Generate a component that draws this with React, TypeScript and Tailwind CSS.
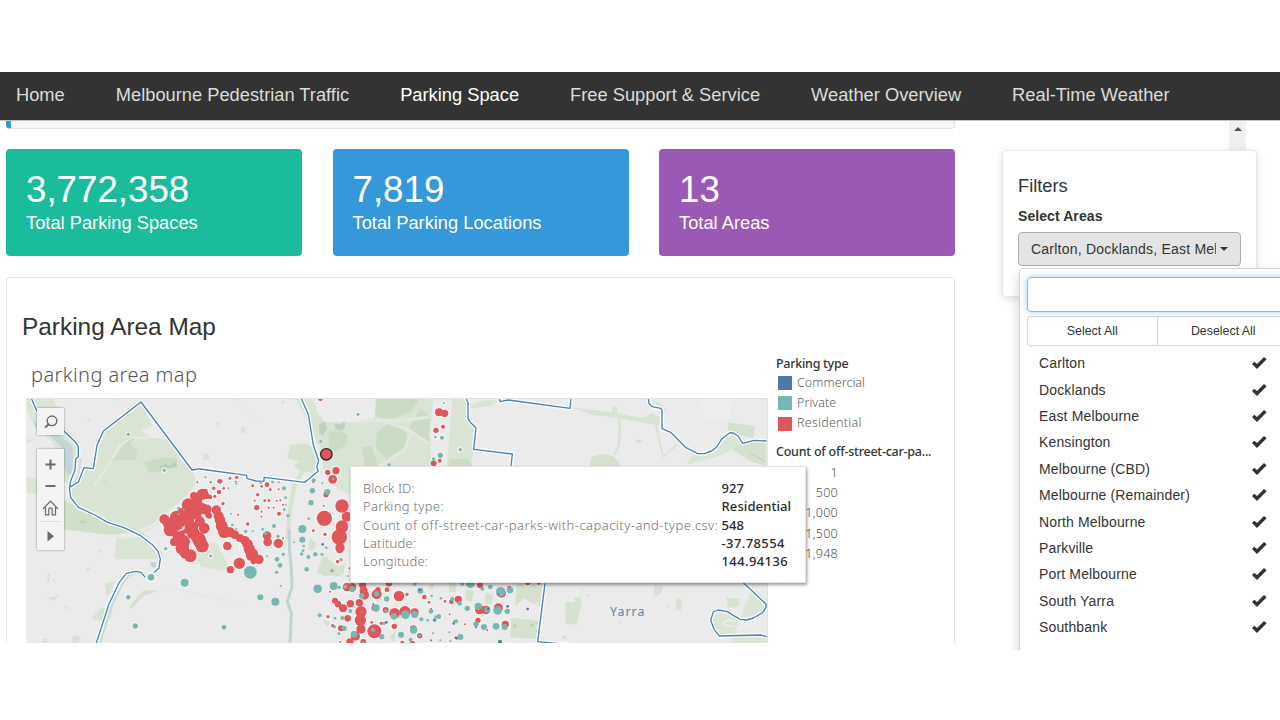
import React from "react";

type Dot = [number, number, number];

const RED = "#e15759";
const TEAL = "#76b7b2";
const BLUE = "#4e79a7";

const navItems = [
  "Home",
  "Melbourne Pedestrian Traffic",
  "Parking Space",
  "Free Support & Service",
  "Weather Overview",
  "Real-Time Weather",
];

const areas = [
  "Carlton",
  "Docklands",
  "East Melbourne",
  "Kensington",
  "Melbourne (CBD)",
  "Melbourne (Remainder)",
  "North Melbourne",
  "Parkville",
  "Port Melbourne",
  "South Yarra",
  "Southbank",
];

/* Marker coordinates are in thirds of a pixel, relative to each map tile. */
const westRed: Dot[] = [
  [532, 277, 3], [572, 277, 3], [598, 274, 6], [581, 295, 5], [597, 306, 6], [585, 319, 4], [571, 321, 6],
  [556, 303, 7], [547, 313, 17], [522, 318, 12], [560, 318, 9], [505, 345, 20], [530, 335, 17], [515, 360, 20],
  [433, 388, 15], [470, 382, 20], [445, 400, 17], [450, 420, 19], [490, 375, 22], [545, 355, 17], [562, 357, 13],
  [567, 377, 9], [530, 375, 15], [540, 395, 15], [553, 414, 15], [475, 430, 20], [462, 456, 12], [490, 455, 20],
  [487, 475, 20], [495, 490, 16], [511, 497, 19], [520, 410, 15], [520, 430, 19], [535, 445, 20], [547, 468, 19],
  [540, 455, 20], [465, 405, 22], [505, 415, 18], [500, 390, 22], [475, 450, 18],
];
const westTeal: Dot[] = [
  [325, 133, 5], [433, 241, 5], [557, 262, 3], [476, 355, 5], [476, 372, 4], [492, 359, 3], [437, 476, 5],
  [572, 498, 4], [393, 562, 10], [494, 578, 12], [325, 622, 7], [346, 708, 8],
];

const midRed: Dot[] = [
  [361, 26, 7], [408, 242, 11], [383, 247, 8], [398, 268, 13], [378, 314, 8], [371, 347, 3], [426, 348, 20],
  [373, 385, 23], [440, 380, 15], [426, 410, 19], [418, 441, 23], [420, 473, 14], [340, 422, 4], [375, 433, 5],
  [412, 515, 4], [450, 535, 4], [340, 277, 3], [60, 274, 7], [110, 262, 5], [90, 265, 4], [107, 275, 3],
  [32, 277, 3], [41, 295, 4], [57, 306, 6], [71, 295, 4], [44, 319, 4], [30, 321, 6], [158, 287, 4],
  [185, 289, 4], [201, 284, 7], [173, 314, 5], [211, 299, 4], [236, 298, 3], [164, 332, 3], [194, 332, 4],
  [207, 332, 4], [230, 332, 3], [241, 331, 3], [170, 353, 8], [185, 365, 3], [206, 353, 3], [221, 353, 3],
  [249, 344, 3], [184, 380, 3], [237, 371, 6], [69, 341, 5], [114, 374, 3], [143, 402, 5], [249, 445, 3],
  [49, 360, 14], [56, 378, 15], [60, 390, 16], [65, 408, 18], [73, 425, 19], [90, 427, 15], [104, 434, 13],
  [120, 444, 12], [135, 452, 14], [143, 463, 16], [148, 478, 17], [156, 494, 19], [177, 508, 14], [160, 515, 8],
  [25, 375, 9], [82, 468, 13], [118, 520, 17], [91, 539, 11], [201, 437, 13], [203, 456, 13], [235, 460, 14],
  [10, 312, 15], [12, 357, 16], [13, 415, 16], [6, 468, 19], [3, 450, 15], [20, 362, 12],
];
const midTeal: Dot[] = [
  [474, 73, 4], [362, 154, 4], [567, 225, 5], [341, 271, 6], [337, 302, 8], [382, 306, 9], [333, 338, 8],
  [367, 280, 3], [326, 386, 4], [307, 417, 12], [307, 449, 9], [311, 468, 4], [309, 482, 4], [305, 492, 5],
  [325, 501, 6], [346, 493, 6], [364, 493, 3], [320, 538, 7], [379, 473, 4], [423, 510, 4], [395, 542, 3],
  [252, 295, 6], [257, 323, 4], [257, 344, 3], [253, 359, 4], [264, 377, 5], [222, 408, 6], [234, 439, 5],
  [250, 493, 5], [231, 508, 7], [240, 526, 7], [230, 547, 5], [201, 499, 3], [242, 588, 3], [282, 457, 3],
  [151, 547, 19], [181, 622, 9], [226, 635, 12], [72, 712, 7], [32, 498, 4], [137, 424, 5], [158, 423, 3],
  [109, 417, 3], [97, 405, 4], [93, 371, 3], [188, 418, 4], [197, 430, 5], [16, 262, 3], [85, 295, 3],
  [109, 281, 3], [218, 276, 4], [182, 278, 4], [237, 277, 3], [399, 267, 4], [397, 542, 4],
  [353, 596, 12],
];

const northRed: Dot[] = [
  [297, 67, 12], [314, 70, 11], [288, 121, 8], [309, 110, 6], [281, 220, 9], [299, 212, 6],
];
const northTeal: Dot[] = [
  [54, 73, 4], [311, 39, 3], [286, 141, 4], [306, 143, 6], [301, 196, 8], [281, 207, 5], [361, 179, 5],
];

const southRed: Dot[] = [
  [89, 0, 10], [83, 35, 5], [60, 125, 3], [111, 111, 13], [126, 112, 13], [158, 105, 11], [161, 122, 12],
  [163, 135, 14], [200, 133, 15], [204, 119, 8], [237, 100, 10], [231, 119, 7], [267, 138, 16], [291, 133, 5],
  [75, 152, 9], [84, 162, 10], [99, 175, 12], [121, 161, 11], [148, 158, 11], [153, 185, 17], [151, 211, 17],
  [153, 237, 14], [136, 258, 14], [120, 276, 11], [160, 276, 9], [113, 205, 10], [54, 200, 5], [68, 227, 5],
  [93, 235, 9], [193, 244, 21], [214, 220, 5], [253, 229, 8], [227, 180, 9], [254, 190, 16], [285, 185, 17],
  [314, 187, 12], [193, 174, 9], [310, 236, 10], [329, 257, 8], [307, 280, 8], [277, 278, 6], [343, 141, 7],
  [357, 157, 4], [363, 176, 3], [387, 199, 6], [405, 154, 4], [424, 155, 7], [445, 148, 11], [419, 193, 3],
  [510, 106, 9], [509, 179, 14], [528, 180, 13], [565, 174, 14], [574, 129, 14], [598, 114, 7], [504, 211, 8],
  [586, 223, 11], [465, 223, 3], [532, 241, 3], [437, 263, 4], [653, 97, 9], [686, 99, 6], [432, 214, 3],
  [185, 217, 4], [91, 276, 3], [316, 97, 5],
];
const southTeal: Dot[] = [
  [16, 13, 6], [37, 14, 4], [93, 29, 5], [65, 63, 4], [113, 78, 3], [23, 116, 12], [71, 108, 12], [88, 112, 5],
  [106, 110, 6], [127, 117, 9], [155, 138, 8], [200, 131, 8], [230, 147, 8], [331, 122, 9], [314, 101, 6],
  [198, 174, 11], [252, 199, 10], [286, 194, 13], [314, 193, 11], [227, 183, 5], [121, 183, 6], [97, 204, 6],
  [75, 205, 4], [29, 196, 6], [73, 230, 5], [102, 235, 8], [87, 251, 4], [132, 253, 10], [189, 240, 6],
  [215, 260, 8], [222, 220, 5], [311, 240, 11], [273, 254, 9], [302, 269, 6], [329, 257, 4], [334, 208, 6],
  [363, 184, 7], [374, 210, 6], [353, 211, 4], [386, 200, 7], [365, 138, 4], [393, 145, 4], [427, 147, 6],
  [449, 160, 7], [472, 175, 8], [457, 101, 6], [481, 101, 13], [541, 111, 7], [517, 116, 6], [572, 125, 14],
  [600, 120, 10], [505, 169, 11], [532, 179, 9], [563, 181, 13], [592, 184, 8], [498, 222, 8], [522, 231, 9],
  [558, 229, 10], [584, 231, 9], [438, 214, 6], [431, 220, 4], [451, 261, 9], [418, 247, 3], [369, 250, 3],
  [421, 273, 3], [391, 271, 3], [160, 280, 5], [377, 200, 4],
];
const southBlue: Dot[] = [
  [329, 120, 4], [190, 163, 3], [229, 217, 4], [373, 210, 3], [431, 221, 3], [440, 265, 4], [570, 275, 6],
  [563, 133, 3], [535, 176, 4], [593, 169, 4], [653, 177, 4], [498, 232, 3], [363, 271, 3],
];

function Halos({ dots }: { dots: Dot[] }) {
  return (
    <>
      {dots.map(([x, y, r], i) => (
        <circle key={i} cx={x} cy={y} r={r + 4} fill="#f4f5f4" opacity="0.8" />
      ))}
    </>
  );
}

function Dots({ dots, color }: { dots: Dot[]; color: string }) {
  return (
    <>
      {dots.map(([x, y, r], i) => (
        <circle key={i} cx={x} cy={y} r={r} fill={color} />
      ))}
    </>
  );
}

function Boundary({ d }: { d: string }) {
  return (
    <>
      <path d={d} fill="none" stroke="#fafbfc" strokeWidth="12" strokeLinejoin="round" />
      <path d={d} fill="none" stroke="#4f83a8" strokeWidth="4" strokeLinejoin="round" />
    </>
  );
}

function ParkingMap() {
  return (
    <svg className="block h-[245px] w-[742px]" viewBox="26 398 742 245">
      <rect x="26" y="398" width="742" height="245" fill="#ebebeb" />
      {/* western parkland */}
      <g transform="translate(20 390) scale(0.333333)">
        <path d="M20 25H95L128 72L122 100L165 140L180 170L172 240L150 290H148L130 270L110 240L100 160L45 110L20 60Z" fill="#dbe5d6" />
        <path d="M20 258L52 268V312L20 308Z" fill="#dbe5d6" />
        <path d="M40 95L110 130L158 168L158 245L145 255L130 230L132 180L95 140L45 110Z" fill="#c4d5d5" />
        <path d="M362 36L397 105L365 122L392 143L455 146L516 240L530 275L487 335L420 400L380 425L330 430L260 395L175 352L150 320L150 293L175 275L192 234L220 236L230 165L250 124Z" fill="#dae4d5" />
        <path d="M130 330L175 352L260 395L345 430L290 437L130 418Z" fill="#d0dfc9" />
        <path d="M288 447L360 440L410 475L420 507L285 508Z" fill="#dae4d5" />
        <path d="M325 152L353 185L347 208L275 212Z" fill="#cddcc6" />
        <path d="M372 215L440 202L470 205L472 232L420 245L385 248Z" fill="#cbdcc4" />
        <path d="M417 230l20-8l10 6l20-12l4 12l-24 6l-24 3z" fill="#bacdbb" />
        <path d="M245 275l18-4l-10 8zM280 212L300 180l45-35L330 140" fill="#cddcc6" />
        <path d="M220 290L272 215L300 165L335 143L392 143" stroke="#e6ebe3" strokeWidth="5" fill="none" />
        <path d="M250 440L340 432L400 405L440 370L500 325" stroke="#e8eae7" strokeWidth="9" fill="none" />
        <path d="M372 600L416 602L370 618L335 657L327 650Z" fill="#d5e1d0" />
        <path d="M82 625l38-10l-18 18zM132 645l14 6l-4 10zM215 685l28-30l35-5l-5 35l-35 7zM255 580l30-5l-10 25l-15 20zM83 552h6v24h-7zM94 567l12 1l-2 10zM196 536l20-3l-14 14zM66 748l14-5l6 18h-20zM160 735l24 5l-10 22h-20zM230 480h22l-10 7zM200 85l10 5l-5 8zM18 150l26-4l-20 14zM550 192l16 2v16l-14-1zM520 508L555 450L600 480V536Z" fill="#d7e3d2" />
        <path d="M390 517h17v15h-12z" fill="#c4d0d2" />
        <path d="M188 385v20m-8-12l8 6l10-6m-18 4h20" stroke="#b9cdb0" strokeWidth="2" fill="none" />
        <path d="M182 205L176 255L155 293L157 320L180 350L270 392L370 432L424 490L420 535L405 550" stroke="#c8dcdc" strokeWidth="5" fill="none" />
        <path d="M378 553L348 548L324 558L304 588L274 650L240 762" stroke="#c5dadb" strokeWidth="6" fill="none" />
        <path d="M440 590L600 627M285 20L310 62" stroke="#e3e4e4" strokeWidth="2" fill="none" />
        <Boundary d="M35 27L50 62L78 92L132 123L165 155L175 170V200L167 207L165 240L152 273L148 293L175 276L192 233L220 236L231 166L250 123L363 36L516 240L542 236L600 245" />
        <Boundary d="M148 293L152 322L175 352L225 375L263 397L310 412L362 437L397 464L414 484L421 507L417 534L402 548" />
        <Boundary d="M376 562L363 547L348 544L319 550L298 577L267 642L228 762" />
        <circle cx="393" cy="562" r="16" fill="#f3f4f3" />
      </g>
      {/* central parkland */}
      <g transform="translate(200 390) scale(0.333333)">
        <path d="M285 24H335L372 90L440 95H530V25H600V228H452V320L410 290L370 235L360 180L340 130L310 70Z" fill="#dae4d5" />
        <path d="M348 65L375 95H520L525 25H350Z" fill="#ececec" />
        <path d="M270 165L310 160L350 175L357 210L345 243L305 250L280 225L300 215L262 205Z" fill="#d6e2d0" />
        <path d="M385 125L420 122L444 135L442 160L410 185L388 180Z" fill="#cbdcc4" />
        <path d="M357 100l20-4l5 20l-14 22l-10-8zM402 100l18 2l14-6l2 14l-10 12l-20-4z" fill="#c0d0c4" />
        <path d="M0 450L50 460L90 535L70 542L0 530Z" fill="#dae4d5" />
        <path d="M350 540L375 500L420 530L425 555L370 558ZM325 480l5-36l20 18l-8 20zM50 97l8-3l-2 16h-6zM123 112l10-2l3 17l-12 3zM12 193l14-2v17l-16 2zM244 33h12l-8 12zM370 688l16 5l4 20z" fill="#d7e3d2" />
        <path d="M310 240L283 285L270 360L262 450" stroke="#d8e2d3" strokeWidth="13" fill="none" />
        <path d="M268 420L268 470L274 540L276 590L262 635L274 670L270 762" stroke="#bed3d5" strokeWidth="9" fill="none" />
        <path d="M0 615L125 640M100 25L170 90M460 560V762" stroke="#e5e6e6" strokeWidth="2" fill="none" />
        <Boundary d="M0 237L140 256V265L168 273L192 274V262L315 277L355 243L350 232L356 212L340 165L325 73L303 24" />
      </g>
      <g transform="translate(340 390) scale(0.333333)">
        <path d="M108 25L232 25L215 60L165 88L105 83Z" fill="#ccdcc5" />
        <path d="M105 83L165 88L232 25H335L375 25L385 90L405 115L400 178L395 228H30V180L60 95Z" fill="#dae4d5" />
        <path d="M110 28H240L215 62L165 85L105 82ZM110 130L140 102L185 103L210 160L140 208L108 175ZM240 58L276 80L272 158L205 118ZM65 172L95 168L115 228H75ZM330 208L385 207L395 228H325Z" fill="#cbdcc4" />
        <path d="M280 26H338L320 228H275L268 130Z" fill="#e9ebe8" />
        <path d="M60 95L200 90L275 80M110 85L205 120L265 160M215 120L195 180L120 228" stroke="#e1e8de" strokeWidth="10" fill="none" />
        <path d="M390 45L430 30L475 32L450 48L395 55Z" fill="#d9e4d4" />
        <Boundary d="M378 25L384 38V85L391 97L408 114L401 178L517 192L513 228" />
        <Boundary d="M478 25L480 35L505 30L690 55L693 25" />
      </g>
      {/* eastern parkland */}
      <g transform="translate(540 390) scale(0.333333)">
        <path d="M92 52L215 67L217 47L232 50V70L310 85L335 70L360 80L355 105L310 98L240 85L160 75Z" fill="#d8e3d3" />
        <path d="M237 82L240 125L235 170L222 195" stroke="#d8e3d3" strokeWidth="8" fill="none" />
        <path d="M345 95L370 200L410 165" stroke="#d8e3d3" strokeWidth="5" fill="none" />
        <path d="M360 110L400 140L470 190L520 190L560 140L590 140L605 160L545 195L440 225L455 195Z" fill="#dae5d5" />
        <path d="M335 30L358 38L385 70L360 55ZM565 97L645 108L640 145L600 135L562 120ZM575 178L605 160L678 150V228L635 215ZM285 148l24 4l-16 9zM150 227Q145 195 185 192Q230 190 240 228Z" fill="#d4e1cf" />
        <path d="M75 640L105 635L102 625L120 620L125 640L110 705L77 700ZM345 585L368 590L365 610L345 620L340 605ZM410 624L426 630L422 664L407 658ZM560 622L600 628L598 645L580 655L562 650ZM125 593l6 5l-6 8zM130 615l20-2v7zM378 645l14 2l-10 5zM233 690l10 5l-4 8zM70 737l9 2v9l-10-1z" fill="#d7e3d2" />
        <path d="M640 585L680 630V650L670 670L615 690L550 670L525 662L514 690L538 738H680V762H570Z" fill="#dae5d5" />
        <path d="M550 700Q560 680 620 705L678 692M550 700Q560 715 678 712M640 590L678 622" stroke="#eeefee" strokeWidth="4" fill="none" />
        <path d="M630 190L678 215" stroke="#b9d0c6" strokeWidth="3" fill="none" />
        <path d="M486 25h86l-2 60q-40 15-80-5z" fill="#eeeeee" />
        <Boundary d="M325 25L327 40L336 50L362 55L366 60V116L392 127L438 173L473 191H493L515 183L530 171L546 146L568 129H580L594 138L608 160L643 151L680 153" />
        <Boundary d="M610 578L678 642V652L668 668L640 684L620 690L600 688L560 664L534 660L520 666L512 690L522 718L538 738L662 735L680 740" />
        <text x="210" y="679" fontSize="37" letterSpacing="3.2" fill="#5b86a3" fontFamily="Noto Sans, sans-serif">
          Yarra
        </text>
      </g>
      <g transform="translate(310 550) scale(0.333333)">
        <path d="M22 70L35 25L50 20L95 80ZM85 55L105 38L100 75ZM360 100h12l-3 18h-12zM418 100h20v26h-22zM468 118l24 6l-7 32l-20-6zM527 128l22 6l-5 28l-20-5zM620 100H697L690 165L665 160L645 145L615 168ZM605 203L688 212L680 267L600 262ZM770 155l10 2v65h-12zM38 210l22 10l-10 10zM238 260l20-18l-4 34zM757 256l12 2v10l-12-1z" fill="#d4e1cf" />
        <path d="M608 225l10-4l4 10l-14 3zM660 225l10-5l5 8l-12 4z" fill="#bed4b8" />
        <Boundary d="M705 100L683 275L780 284" />
      </g>
      {/* marker halos, below every marker */}
      <g transform="translate(340 390) scale(0.333333)">
        <Halos dots={northRed} />
        <Halos dots={northTeal} />
      </g>
      <g transform="translate(20 390) scale(0.333333)">
        <Halos dots={westRed} />
        <Halos dots={westTeal} />
      </g>
      <g transform="translate(200 390) scale(0.333333)">
        <Halos dots={midRed} />
      </g>
      <g transform="translate(310 550) scale(0.333333)">
        <Halos dots={southRed} />
      </g>
      {/* markers */}
      <g transform="translate(340 390) scale(0.333333)">
        <Dots dots={northRed} color={RED} />
        <Dots dots={northTeal} color={TEAL} />
      </g>
      <g transform="translate(20 390) scale(0.333333)">
        <Dots dots={westRed} color={RED} />
        <path d="M470 424l16-8l8-12v14l-14 6z" fill="#f1e9e9" />
        <Dots dots={westTeal} color={TEAL} />
      </g>
      <g transform="translate(200 390) scale(0.333333)">
        <Dots dots={midRed} color={RED} />
        <Dots dots={midTeal} color={TEAL} />
        <Dots dots={[[390, 378, 3], [368, 463, 4]]} color={BLUE} />
        <circle cx="379" cy="193" r="17" fill={RED} stroke="#26292b" strokeWidth="4" />
      </g>
      <g transform="translate(310 550) scale(0.333333)">
        <Dots dots={southRed} color={RED} />
        <Dots dots={southTeal} color={TEAL} />
        <Dots dots={southBlue} color={BLUE} />
      </g>
      <path d="M26 398.5H768M767.5 398V643" stroke="#e2e2e2" fill="none" />
    </svg>
  );
}

function MapControls() {
  return (
    <div className="absolute top-[10px] left-[11px] flex flex-col gap-[14px] text-[#6a6a6a]">
      <div className="flex h-[27px] w-[27px] items-center justify-center bg-[#f4f4f4] shadow-[0_0_2px_rgba(0,0,0,0.45)]">
        <svg className="h-[14px] w-[14px]" viewBox="0 0 14 14" fill="none" stroke="currentColor">
          <circle cx="8" cy="5.8" r="4.8" strokeWidth="1.4" />
          <path d="M4.8 9.2L1 12.6" strokeWidth="2" />
        </svg>
      </div>
      <div className="flex h-[101px] w-[27px] flex-col items-center bg-[#f4f4f4] shadow-[0_0_2px_rgba(0,0,0,0.45)]">
        <svg className="h-[101px] w-[27px]" viewBox="0 0 27 101" fill="none" stroke="currentColor">
          <path d="M8.5 15.5H18.5M13.5 10.5V20.5M8.5 37H18.5" strokeWidth="2" />
          <path d="M6 60L13.5 52.2L21 60M8.5 58V65.9H11.8V60.2Q11.8 58.8 13.5 58.8Q15.2 58.8 15.2 60.2V65.9H18.5V58" strokeWidth="1.2" />
          <path d="M4 72.5H23" stroke="#dedede" />
          <path d="M10.5 82V92.4L17 87.2Z" fill="currentColor" stroke="none" />
        </svg>
      </div>
    </div>
  );
}

const tooltipRows = [
  { k: "Block ID:", v: "927", track: "" },
  { k: "Parking type:", v: "Residential", track: "tracking-[0.3px]" },
  { k: "Count of off-street-car-parks-with-capacity-and-type.csv:", v: "548", track: "tracking-[0.46px]" },
  { k: "Latitude:", v: "-37.78554", track: "tracking-[0.2px]" },
  { k: "Longitude:", v: "144.94136", track: "tracking-[0.2px]" },
];

function MapTooltip() {
  return (
    <div className="absolute top-[68px] left-[324px] z-10 h-[117px] w-[456px] border border-[#e4e4e4] bg-white pt-[12px] pl-[12px] text-[13px] shadow-[1px_2px_3px_rgba(0,0,0,0.4)]">
      {tooltipRows.map(({ k, v, track }) => (
        <div key={k} className="flex h-[18.3px] leading-[18.3px] whitespace-nowrap">
          <span className={`w-[358.5px] font-light text-[#737373] ${track}`}>{k}</span>
          <span className={v.includes(".") ? "font-medium tracking-[0.4px] text-[#2a2a2a]" : "font-medium tracking-[0.1px] text-[#2a2a2a]"}>
            {v}
          </span>
        </div>
      ))}
    </div>
  );
}

const legend = [
  { name: "Commercial", swatch: "bg-[#4e79a7]" },
  { name: "Private", swatch: "bg-[#76b7b2]" },
  { name: "Residential", swatch: "bg-[#e15759]" },
];

function MapCard() {
  return (
    <section className="mt-[21px] flex h-[366px] rounded-t-[4px] border border-b-0 border-[#e3e3e3] bg-white pl-[15px]">
      <div className="flex w-[746px] flex-col">
        <h2 className="mt-[34px] h-[30px] text-[24.4px] leading-[30px] text-[#333]">Parking Area Map</h2>
        <div className="mt-[20px] h-[26px] pl-[9px] font-['Noto_Sans',sans-serif] text-[20px] leading-[26px] font-light tracking-[0.4px] text-[#555]">
          parking area map
        </div>
        <div className="relative mt-[10px] ml-[4px] w-[742px] font-['Noto_Sans',sans-serif]">
          <ParkingMap />
          <MapControls />
          <MapTooltip />
        </div>
      </div>
      <div className="ml-[8px] flex w-[170px] flex-col pt-[76px] font-['Noto_Sans',sans-serif] text-[12.5px] text-[#333]">
        <div className="h-[19px] leading-[19px] font-medium tracking-[-0.27px]">Parking type</div>
        {legend.map((l) => (
          <div key={l.name} className="flex h-[20.3px] items-center gap-[5px] pl-[2px] text-[#606060]">
            <span className={`h-[14px] w-[14px] ${l.swatch}`} />
            <span className={l.name === "Residential" ? "font-light tracking-[0.25px]" : "font-light tracking-[0.05px]"}>
              {l.name}
            </span>
          </div>
        ))}
        <div className="mt-[8px] h-[20px] leading-[20px] font-medium tracking-[-0.23px] whitespace-nowrap">
          Count of off-street-car-pa...
        </div>
        <div className="w-[62px] text-right font-light text-[#505050]">
          {["1", "500", "1,000", "1,500", "1,948"].map((n) => (
            <div key={n} className="h-[20.3px] leading-[21.5px] tracking-[0.25px]">
              {n}
            </div>
          ))}
        </div>
      </div>
    </section>
  );
}

function Stat({ value, label, bg }: { value: string; label: string; bg: string }) {
  return (
    <div className={`h-[107px] w-[296px] rounded-[4px] pt-[19px] pl-[20px] text-white ${bg}`}>
      <div className="h-[42px] text-[36.7px] leading-[43px]">{value}</div>
      <div className="h-[24px] text-[18.3px] leading-[25px]">{label}</div>
    </div>
  );
}

function AreaDropdown() {
  return (
    <div className="absolute top-[148px] left-[1019px] h-[400px] w-[280px] rounded-[4px] border border-[#d5d5d5] bg-white pt-[8px] pl-[7px] shadow-[0_6px_12px_rgba(0,0,0,0.18)]">
      <div className="h-[35px] w-[290px] rounded-[4px] border border-[#7fbcec] bg-white shadow-[0_0_7px_rgba(102,175,233,0.6)]" />
      <div className="mt-[4px] flex h-[30px] w-[263px] rounded-[3px] border border-[#d4d4d4] text-center text-[12.4px] leading-[28px] text-[#333]">
        <div className="w-[130px] border-r border-[#d4d4d4]">Select All</div>
        <div className="w-[132px]">Deselect All</div>
      </div>
      <ul className="mt-[4px] pl-[12px] text-[14px] text-[#333]">
        {areas.map((a) => (
          <li key={a} className="flex h-[26.42px] items-center">
            <span className="w-[213px] pt-[1px] tracking-[0.15px]">{a}</span>
            <svg className="h-[12px] w-[15px]" viewBox="217 63 45 36" fill="#333">
              <path d="M217 84L224 77L232 84L253 63L261 70L232 99Z" />
            </svg>
          </li>
        ))}
      </ul>
    </div>
  );
}

function Filters() {
  return (
    <aside className="relative mt-[30px] ml-[47px] h-[147px] w-[255px] rounded-[4px] border border-[#e6e6e6] bg-white pt-[23px] pl-[15px] shadow-[0_2px_8px_rgba(0,0,0,0.12)]">
      <h3 className="h-[24px] text-[18.3px] leading-[24px] text-[#333]">Filters</h3>
      <div className="mt-[8px] h-[20px] text-[14px] leading-[20px] font-bold tracking-[0.08px] text-[#333]">
        Select Areas
      </div>
      <div className="mt-[6px] flex h-[34px] w-[223px] items-center rounded-[4px] border border-[#adadad] bg-[#e4e4e4] pl-[12px] text-[14px] text-[#333]">
        <span className="w-[185px] overflow-hidden tracking-[0.22px] whitespace-nowrap">
          Carlton, Docklands, East Melbourne
        </span>
        <svg className="ml-[4px] h-[4px] w-[8px]" viewBox="0 0 8 4">
          <path d="M0 0H8L4 4Z" fill="#333" />
        </svg>
      </div>
    </aside>
  );
}

export default function App() {
  return (
    <div className="h-[720px] w-[1280px] overflow-hidden bg-white pt-[72px] font-['Liberation_Sans',Arial,sans-serif]">
      <nav className="flex h-[48px] gap-[51px] bg-[#333] pl-[16px] text-[18.3px] leading-[45px] whitespace-nowrap text-[#dcdcdc]">
        {navItems.map((n) => (
          <a key={n} className={n === "Parking Space" ? "text-white" : ""}>
            {n}
          </a>
        ))}
      </nav>
      <div className="relative flex h-[530px] overflow-hidden">
        <main className="ml-[6px] h-[523px] w-[949px] overflow-hidden">
          <div className="h-[9px] rounded-b-[4px] border-r border-b border-l-[5px] border-r-[#e2e2e2] border-b-[#e2e2e2] border-l-[#3498db] bg-[#f7f7f7]" />
          <div className="mt-[20px] flex justify-between">
            <Stat value="3,772,358" label="Total Parking Spaces" bg="bg-[#1abc9c]" />
            <Stat value="7,819" label="Total Parking Locations" bg="bg-[#3498db]" />
            <Stat value="13" label="Total Areas" bg="bg-[#9b59b6]" />
          </div>
          <MapCard />
        </main>
        <div className="absolute top-0 left-[1229px] flex h-[31px] w-[17px] justify-center bg-[#f0f0f0] pt-[7px]">
          <svg className="h-[4px] w-[8px]" viewBox="0 0 8 4">
            <path d="M0 4H8L4 0Z" fill="#505050" />
          </svg>
        </div>
        <Filters />
        <AreaDropdown />
        <div className="absolute inset-x-0 top-0 h-px bg-[#c4c4c4]" />
      </div>
    </div>
  );
}
